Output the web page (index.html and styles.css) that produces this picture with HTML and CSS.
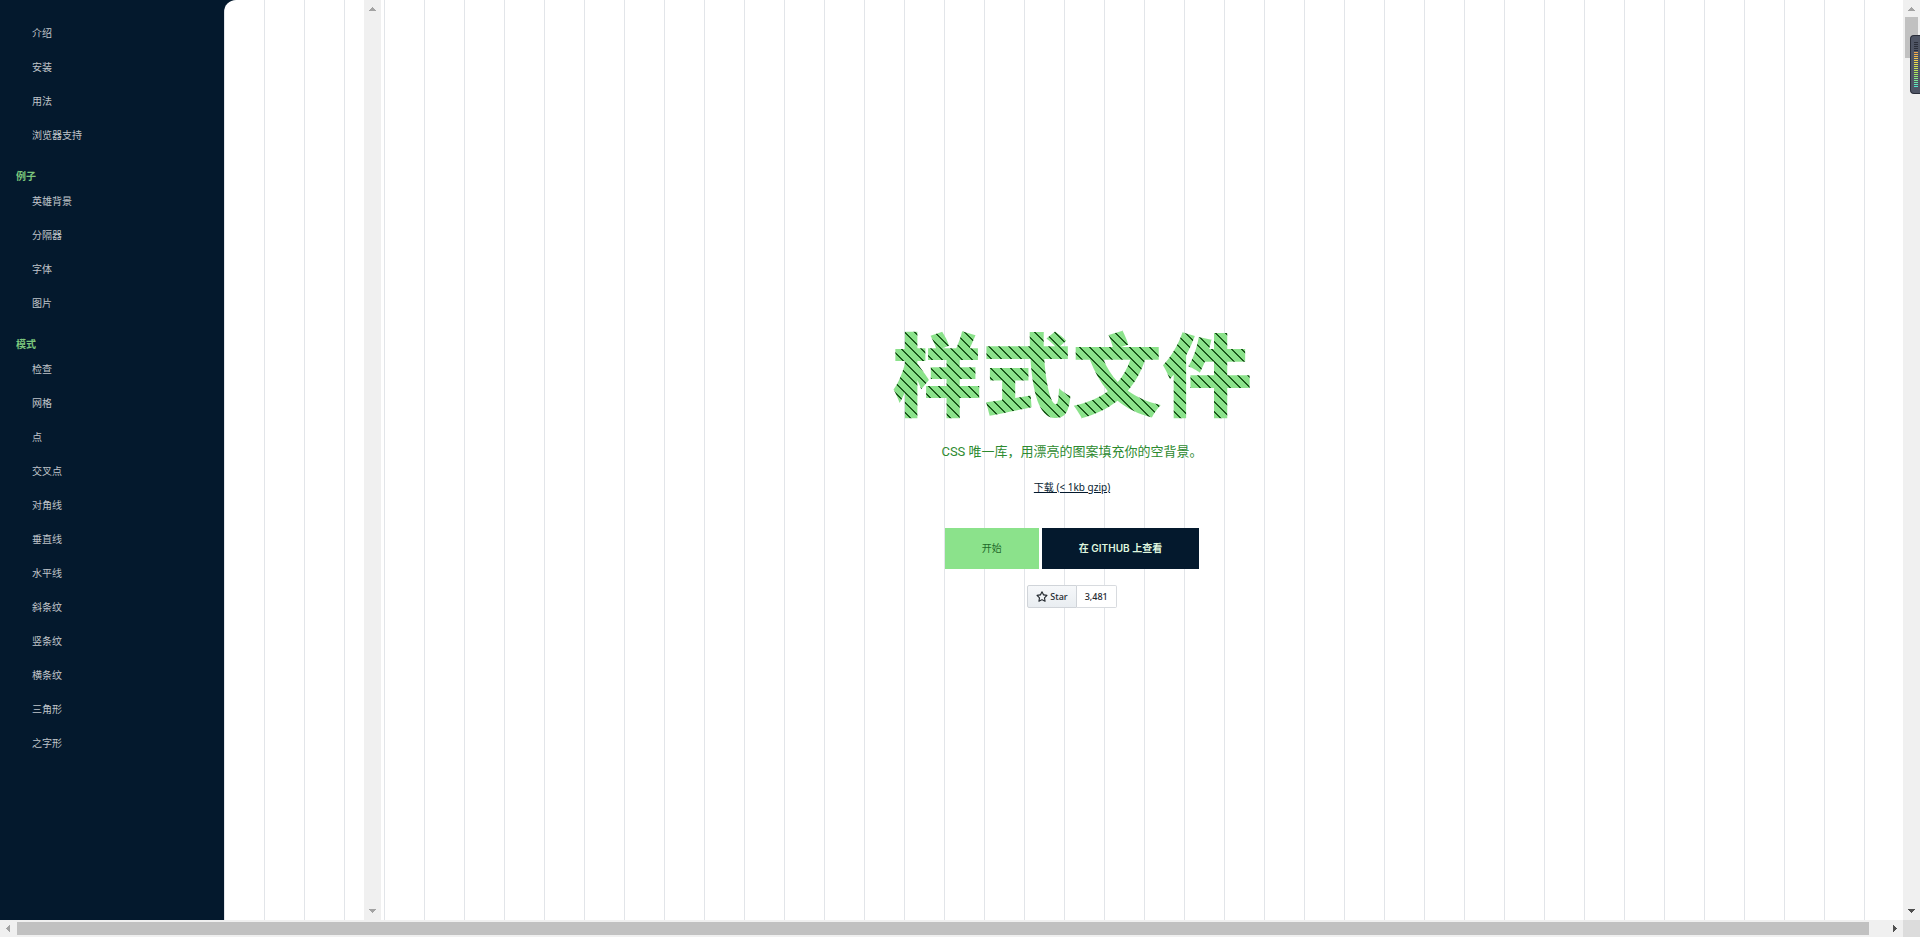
FILE: index.html
```html
<!DOCTYPE html>
<html lang="zh-CN">
<head>
<meta charset="utf-8">
<title>样式文件</title>
<link rel="stylesheet" href="styles.css">
</head>
<body>
<div class="page">
  <nav class="sidebar" aria-label="目录">
    <ul class="nav-list">
      <li><a href="#intro">介绍</a></li>
      <li><a href="#install">安装</a></li>
      <li><a href="#usage">用法</a></li>
      <li><a href="#support">浏览器支持</a></li>
    </ul>
    <h2 class="nav-title">例子</h2>
    <ul class="nav-list">
      <li><a href="#hero">英雄背景</a></li>
      <li><a href="#separator">分隔器</a></li>
      <li><a href="#font">字体</a></li>
      <li><a href="#image">图片</a></li>
    </ul>
    <h2 class="nav-title">模式</h2>
    <ul class="nav-list">
      <li><a href="#checks">检查</a></li>
      <li><a href="#grid">网格</a></li>
      <li><a href="#dots">点</a></li>
      <li><a href="#cross-dots">交叉点</a></li>
      <li><a href="#diagonal-lines">对角线</a></li>
      <li><a href="#vertical-lines">垂直线</a></li>
      <li><a href="#horizontal-lines">水平线</a></li>
      <li><a href="#diagonal-stripes">斜条纹</a></li>
      <li><a href="#vertical-stripes">竖条纹</a></li>
      <li><a href="#horizontal-stripes">横条纹</a></li>
      <li><a href="#triangles">三角形</a></li>
      <li><a href="#zigzag">之字形</a></li>
    </ul>
  </nav>
  <main class="content">
    <div class="scrollbar inner-bar" aria-hidden="true">
      <svg class="arrow" viewBox="0 0 17 17" shape-rendering="crispEdges"><path d="M5 11h7v-1h-1v-1h-1v-1h-1v-1h-1v1h-1v1h-1v1h-1z"/></svg>
      <svg class="arrow" viewBox="0 0 17 17" shape-rendering="crispEdges"><path d="M5 6h7v1h-1v1h-1v1h-1v1h-1v-1h-1v-1h-1v-1h-1z"/></svg>
    </div>
    <section class="hero">
      <h1 class="title">样式文件</h1>
      <p class="subtitle">CSS 唯一库，用漂亮的图案填充你的空背景。</p>
      <a class="download" href="#download">下载 (&lt; 1kb gzip)</a>
      <div class="actions">
        <a class="button primary" href="#start">开始</a>
        <a class="button dark" href="#github">在 GITHUB 上查看</a>
      </div>
      <div class="star-widget">
        <a class="star" href="#star"><svg viewBox="0 0 16 16" width="12" height="12" fill="currentColor" aria-hidden="true"><path d="M8 .25a.75.75 0 0 1 .673.418l1.882 3.815 4.21.612a.75.75 0 0 1 .416 1.279l-3.046 2.97.719 4.192a.751.751 0 0 1-1.088.791L8 12.347l-3.766 1.98a.75.75 0 0 1-1.088-.79l.72-4.194L.818 6.374a.75.75 0 0 1 .416-1.28l4.21-.611L7.327.668A.75.75 0 0 1 8 .25Zm0 2.445L6.615 5.5a.75.75 0 0 1-.564.41l-3.097.45 2.24 2.184a.75.75 0 0 1 .216.664l-.528 3.084 2.769-1.456a.75.75 0 0 1 .698 0l2.77 1.456-.53-3.084a.75.75 0 0 1 .216-.664l2.24-2.183-3.096-.45a.75.75 0 0 1-.564-.41L8 2.694Z"/></svg><span>Star</span></a>
        <a class="count" href="#stargazers">3,481</a>
      </div>
    </section>
  </main>
  <div class="scrollbar page-bar" aria-hidden="true">
    <svg class="arrow" viewBox="0 0 17 17" shape-rendering="crispEdges"><path d="M5 11h7v-1h-1v-1h-1v-1h-1v-1h-1v1h-1v1h-1v1h-1z"/></svg>
    <span class="thumb"></span>
    <svg class="arrow strong" viewBox="0 0 17 17" shape-rendering="crispEdges"><path d="M5 6h7v1h-1v1h-1v1h-1v1h-1v-1h-1v-1h-1v-1h-1z"/></svg>
    <div class="meter"><span class="meter-bars"></span></div>
  </div>
</div>
<div class="bottom-bar" aria-hidden="true">
  <svg class="arrow" viewBox="0 0 17 17" shape-rendering="crispEdges"><path d="M10 5v7h-1v-1h-1v-1h-1v-1h-1v-1h1v-1h1v-1h1v-1z"/></svg>
  <span class="thumb-x"></span>
  <svg class="arrow strong" viewBox="0 0 17 17" shape-rendering="crispEdges"><path d="M7 5v7h1v-1h1v-1h1v-1h1v-1h-1v-1h-1v-1h-1v-1z"/></svg>
  <span class="corner"></span>
</div>
</body>
</html>
```
FILE: styles.css
```css
* { box-sizing: border-box; }

body {
  margin: 0;
  height: 100vh;
  display: flex;
  flex-direction: column;
  overflow: hidden;
  background: #fff;
  font-family: "Noto Sans", "Noto Sans CJK SC", sans-serif;
  font-size: 10px;
}

a { color: inherit; text-decoration: none; }

.page {
  position: relative;
  flex: 1;
  min-height: 0;
  display: flex;
  background: #04192d;
}

.sidebar {
  width: 224px;
  padding: 16px;
  color: #c0c5ca;
}

.nav-list {
  margin: 0;
  padding: 0 16px;
  list-style: none;
}

.nav-list a {
  display: block;
  font-size: 10px;
  line-height: 34px;
}

.nav-title {
  margin: 17px 0 0;
  font-size: 10px;
  font-weight: 700;
  line-height: 15px;
  color: #7bc67c;
}

.content {
  position: relative;
  flex: 1;
  display: flex;
  border-top-left-radius: 12px;
  background: repeating-linear-gradient(90deg, #e2e5e9 0, #e2e5e9 1px, #fff 1px, #fff 40px);
}

/* Scrollbars overlay the pages they belong to */
.scrollbar {
  position: absolute;
  top: 0;
  bottom: 0;
  width: 17px;
  display: flex;
  flex-direction: column;
  background: #f0f0f0;
}

.inner-bar { left: 140px; justify-content: space-between; }
.page-bar { right: 0; }
.page-bar .strong { margin-top: auto; }

.arrow {
  display: block;
  width: 17px;
  height: 17px;
  flex: none;
  fill: #a3a3a3;
}

.strong { fill: #505050; }

.thumb {
  width: 13px;
  height: 41px;
  margin: 0 2px;
  background: #c1c1c1;
}

.meter {
  position: absolute;
  top: 35px;
  right: 0;
  width: 10px;
  height: 59px;
  padding: 6px 2px 6px 3px;
  border: 1px solid #2a2e3a;
  border-right: 0;
  border-radius: 4px 0 0 4px;
  background: #4f5565;
}

.meter-bars {
  display: block;
  height: 100%;
  background:
    repeating-linear-gradient(180deg, transparent 0, transparent 1px, #4f5565 1px, #4f5565 2px),
    linear-gradient(180deg, #2a2e3a 0, #2a2e3a 10px, #f2a54a 10px, #f0dc4c 20px, #a6e85c 32px, #4fe6d0 45px);
}

.hero {
  flex: 1;
  display: flex;
  flex-direction: column;
  align-items: center;
  justify-content: center;
  padding-top: 8px;
}

.title {
  margin: 0;
  font-size: 90px;
  font-weight: 900;
  line-height: 108px;
  color: transparent;
  background: repeating-linear-gradient(45deg, #1a571b 0, #1a571b 1px, #8be28b 1px, #8be28b 50%) 0 0 / 10px 10px;
  -webkit-background-clip: text;
  background-clip: text;
}

.subtitle {
  margin: 14px 0 0;
  font-family: Roboto, "Noto Sans CJK SC", sans-serif;
  font-size: 13px;
  line-height: 20px;
  color: #2d8a2f;
}

.download {
  margin-top: 17px;
  line-height: 16px;
  color: #04192d;
  text-decoration: underline;
}

.actions {
  display: flex;
  gap: 3px;
  margin-top: 33px;
}

.button {
  padding: 0 37px;
  font-size: 10px;
  line-height: 41px;
}

.primary { color: #1f6a2a; background: #8be28b; }

.dark {
  font-family: Inter, "Noto Sans CJK SC", sans-serif;
  font-weight: 600;
  color: #dff5df;
  background: #04192d;
}

.star-widget {
  display: flex;
  margin-top: 16px;
  font-size: 9px;
  font-weight: 500;
  line-height: 21px;
  color: #24292f;
}

.star {
  display: flex;
  align-items: center;
  gap: 2px;
  padding: 0 8px;
  border: 1px solid #d0d4d9;
  border-radius: 2px 0 0 2px;
  background: linear-gradient(180deg, #f6f8fa, #e9edf1);
}

.count {
  padding: 0 8px;
  border: 1px solid #d8dbdf;
  border-left: 0;
  border-radius: 0 2px 2px 0;
  background: #fff;
}

.bottom-bar {
  flex: none;
  height: 17px;
  display: flex;
  background: #f0f0f0;
}

.thumb-x {
  flex: 1;
  margin: 2px 17px 2px 0;
  background: #c1c1c1;
}

.corner { width: 17px; background: #dcdcdc; }
```
